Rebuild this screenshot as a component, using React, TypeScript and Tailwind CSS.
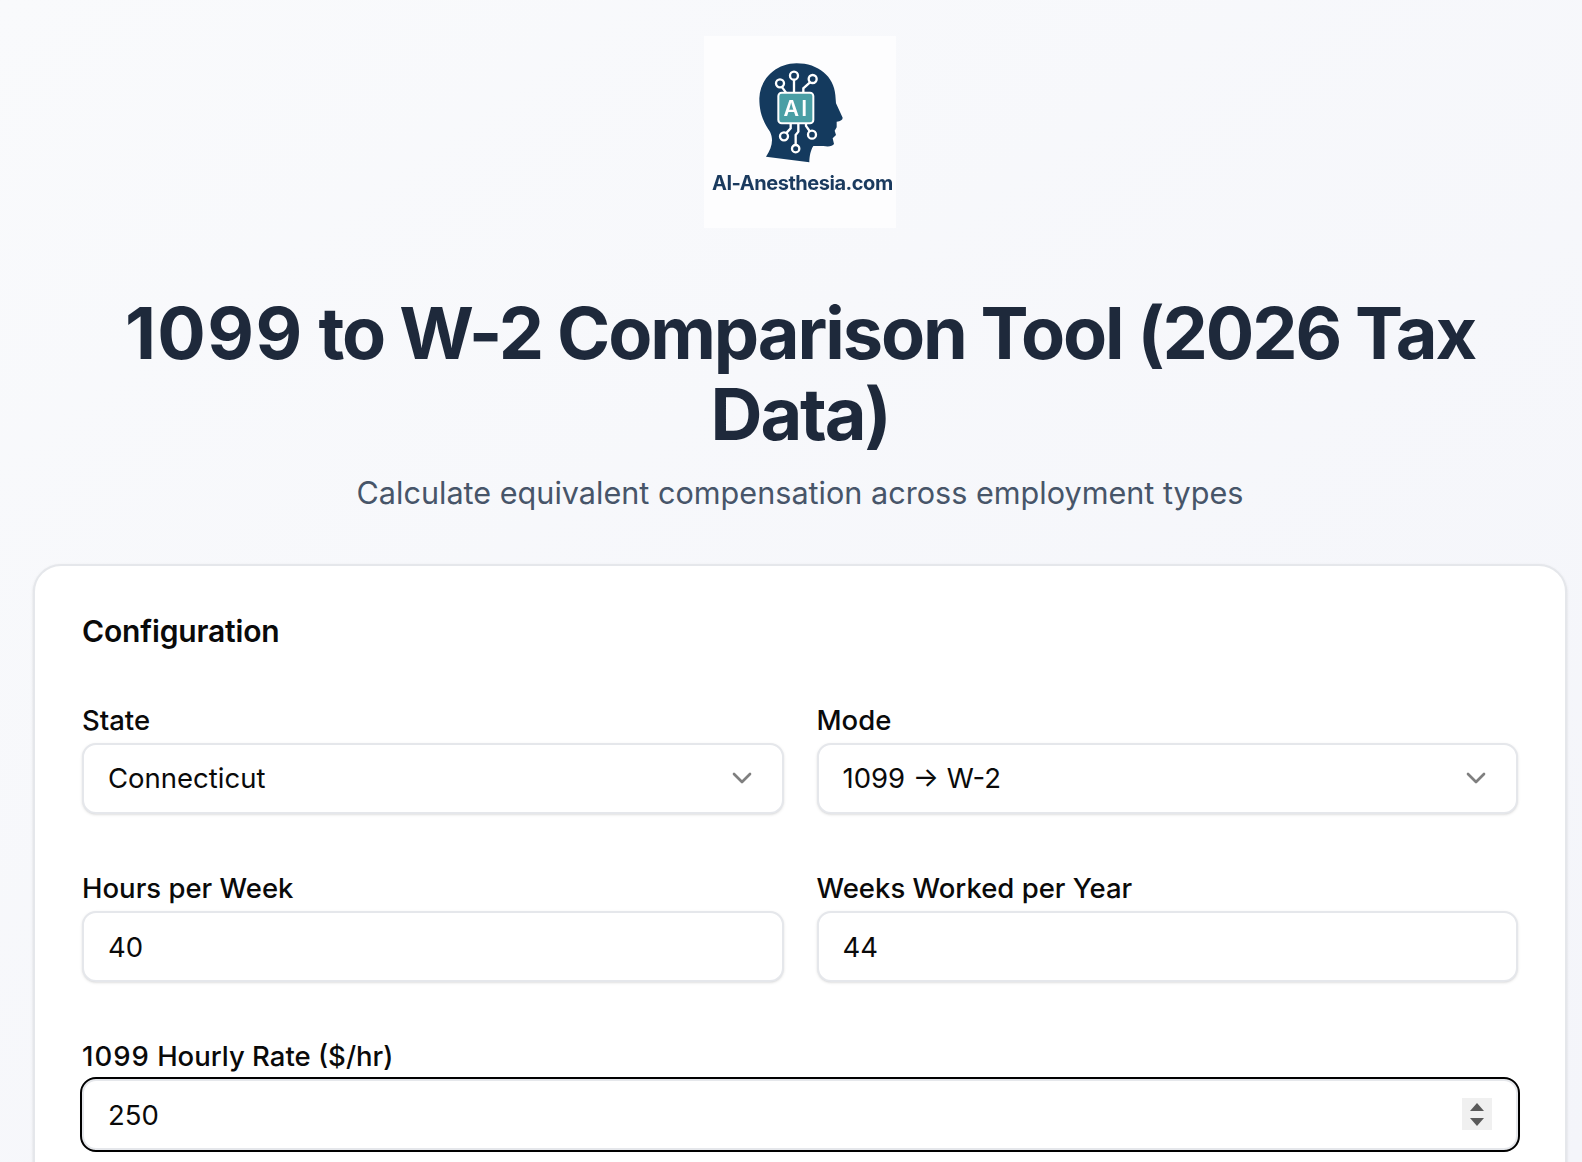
import { ChevronDown } from "lucide-react";

const font = { fontFamily: "Inter, 'Noto Sans', sans-serif" };

function Logo() {
  return (
    <div className="w-[192px] h-[192px] bg-[#fdfdfe]">
      <svg viewBox="72 48 576 576" className="w-full h-full blur-[0.4px]">
        <path
          fill="#143a5e"
          d="M258 410 C275 385 282 360 270 335 C245 300 238 270 238 235 C240 175 290 130 350 130 C415 130 462 170 466 225 L468 250 L488 293 Q488 302 470 305 L470 322 L464 332 L468 345 L458 355 L462 372 Q455 382 430 378 L400 378 C392 390 388 410 388 427 Z"
        />
        <g fill="none" stroke="#fff" strokeWidth="7">
          <path d="M342 178V218M305 200L318 218M390 187L370 205V218M318 340L332 325V310M390 335L378 318V310M347 376V345L355 335V310" />
          <circle cx="342" cy="167" r="12" />
          <circle cx="300" cy="190" r="12" />
          <circle cx="398" cy="177" r="12" />
          <circle cx="312" cy="349" r="12" />
          <circle cx="396" cy="344" r="12" />
          <circle cx="347" cy="386" r="11" />
        </g>
        <rect x="295" y="218" width="105" height="92" rx="10" fill="#4a9fa5" stroke="#fff" strokeWidth="6" />
        <text x="349" y="288" textAnchor="middle" fill="#fff" fontSize="64" fontWeight="600" fontFamily="Inter" letterSpacing="6">AI</text>
        <text x="367" y="510" textAnchor="middle" fill="#1a3a5e" fontSize="60" fontWeight="700" fontFamily="Inter" letterSpacing="-1.4">AI-Anesthesia.com</text>
      </svg>
    </div>
  );
}

function Field({ label, value, select }: { label: string; value: string; select?: boolean }) {
  return (
    <div className="flex flex-col">
      <label className="text-[27.5px] leading-[34px] font-medium text-[#0a0a0a] mb-[6px]">{label}</label>
      <div className="relative">
        {select ? (
          <select
            defaultValue={value}
            className="appearance-none w-full h-[71px] pl-[24px] pr-12 bg-white border-2 border-[#e5e7eb] rounded-[14px] text-[27.5px] text-[#0a0a0a] shadow-sm"
          >
            <option>{value}</option>
          </select>
        ) : (
          <input
            readOnly
            value={value}
            className="w-full h-[71px] pl-[24px] pr-3 bg-white border-2 border-[#e5e7eb] rounded-[14px] text-[27.5px] text-[#0a0a0a] shadow-sm"
          />
        )}
        {select && (
          <ChevronDown className="absolute right-[26px] top-[19px] w-[32px] h-[32px] text-[#7f7f7f] pointer-events-none" />
        )}
      </div>
    </div>
  );
}

export default function App() {
  return (
    <div className="w-full h-screen overflow-hidden bg-gradient-to-br from-[#f9fafc] to-[#f4f5fa]" style={font}>
      <div className="w-[1600px] px-[33px] pt-[36px] flex flex-col items-center">
        <Logo />
        <h1 className="mt-[64px] w-[1440px] text-center text-[72px] leading-[81px] font-bold tracking-[-2.1px] text-[#1e293b]">
          <span className="tracking-[1.4px]">1099</span> to W-2 Comparison Tool (2026 Tax Data)
        </h1>
        <p className="mt-[17px] text-[30.6px] leading-[44px] text-[#475569]">
          Calculate equivalent compensation across employment types
        </p>
        <div className="mt-[49px] w-full bg-white border-2 border-[#e5e7eb] rounded-[28px] shadow-sm pt-[43px] px-[47px] pb-[60px]">
          <h2 className="text-[30px] leading-[44px] font-semibold tracking-[-0.15px] text-[#0a0a0a] mb-[50px]">Configuration</h2>
          <div className="grid grid-cols-2 gap-x-[33px] gap-y-[57px]">
            <Field label="State" value="Connecticut" select />
            <Field label="Mode" value="1099 → W-2" select />
            <Field label="Hours per Week" value="40" />
            <Field label="Weeks Worked per Year" value="44" />
            <div className="col-span-2 flex flex-col">
              <label className="text-[27.5px] leading-[34px] font-medium text-[#0a0a0a] mb-[6px]">
                <span className="tracking-[1px]">1099</span> Hourly Rate ($/hr)
              </label>
              <div className="relative">
                <input
                  readOnly
                  value="250"
                  className="w-full h-[71px] pl-[24px] pr-3 bg-white border-2 border-[#e5e7eb] rounded-[14px] text-[27.5px] text-[#0a0a0a] outline-2 outline-black shadow-sm"
                />
                <div className="absolute right-[26px] top-[19px] w-[30px] h-[32px] bg-[#f0f0f0] flex flex-col items-center justify-center gap-[7px]">
                  <div className="w-0 h-0 border-x-[7px] border-x-transparent border-b-[8px] border-b-[#5a5a5a]" />
                  <div className="w-0 h-0 border-x-[7px] border-x-transparent border-t-[8px] border-t-[#5a5a5a]" />
                </div>
              </div>
            </div>
          </div>
        </div>
      </div>
    </div>
  );
}
